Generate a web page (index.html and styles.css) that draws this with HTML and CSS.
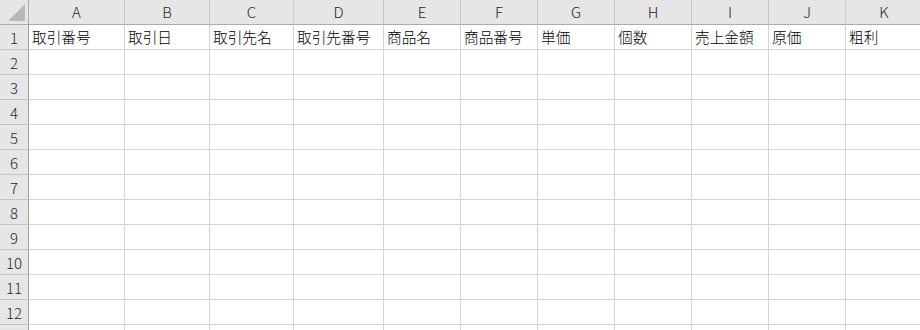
FILE: index.html
```html
<!DOCTYPE html>
<html lang="ja">
<head>
<meta charset="utf-8">
<title>Sheet1</title>
<link rel="stylesheet" href="styles.css">
</head>
<body>
<div class="sheet">
  <div class="corner"><svg class="corner-mark" width="17" height="17" viewBox="0 0 17 17"><polygon points="17,0 17,17 0,17" fill="#b7b7b7"/></svg></div>
  <div class="col-head">A</div><div class="col-head">B</div><div class="col-head">C</div><div class="col-head">D</div><div class="col-head">E</div><div class="col-head">F</div><div class="col-head">G</div><div class="col-head">H</div><div class="col-head">I</div><div class="col-head">J</div><div class="col-head">K</div>

  <div class="row-head">1</div><div class="cell">取引番号</div><div class="cell">取引日</div><div class="cell">取引先名</div><div class="cell">取引先番号</div><div class="cell">商品名</div><div class="cell">商品番号</div><div class="cell">単価</div><div class="cell">個数</div><div class="cell">売上金額</div><div class="cell">原価</div><div class="cell">粗利</div>
  <div class="row-head">2</div><div class="cell"></div><div class="cell"></div><div class="cell"></div><div class="cell"></div><div class="cell"></div><div class="cell"></div><div class="cell"></div><div class="cell"></div><div class="cell"></div><div class="cell"></div><div class="cell"></div>
  <div class="row-head">3</div><div class="cell"></div><div class="cell"></div><div class="cell"></div><div class="cell"></div><div class="cell"></div><div class="cell"></div><div class="cell"></div><div class="cell"></div><div class="cell"></div><div class="cell"></div><div class="cell"></div>
  <div class="row-head">4</div><div class="cell"></div><div class="cell"></div><div class="cell"></div><div class="cell"></div><div class="cell"></div><div class="cell"></div><div class="cell"></div><div class="cell"></div><div class="cell"></div><div class="cell"></div><div class="cell"></div>
  <div class="row-head">5</div><div class="cell"></div><div class="cell"></div><div class="cell"></div><div class="cell"></div><div class="cell"></div><div class="cell"></div><div class="cell"></div><div class="cell"></div><div class="cell"></div><div class="cell"></div><div class="cell"></div>
  <div class="row-head">6</div><div class="cell"></div><div class="cell"></div><div class="cell"></div><div class="cell"></div><div class="cell"></div><div class="cell"></div><div class="cell"></div><div class="cell"></div><div class="cell"></div><div class="cell"></div><div class="cell"></div>
  <div class="row-head">7</div><div class="cell"></div><div class="cell"></div><div class="cell"></div><div class="cell"></div><div class="cell"></div><div class="cell"></div><div class="cell"></div><div class="cell"></div><div class="cell"></div><div class="cell"></div><div class="cell"></div>
  <div class="row-head">8</div><div class="cell"></div><div class="cell"></div><div class="cell"></div><div class="cell"></div><div class="cell"></div><div class="cell"></div><div class="cell"></div><div class="cell"></div><div class="cell"></div><div class="cell"></div><div class="cell"></div>
  <div class="row-head">9</div><div class="cell"></div><div class="cell"></div><div class="cell"></div><div class="cell"></div><div class="cell"></div><div class="cell"></div><div class="cell"></div><div class="cell"></div><div class="cell"></div><div class="cell"></div><div class="cell"></div>
  <div class="row-head">10</div><div class="cell"></div><div class="cell"></div><div class="cell"></div><div class="cell"></div><div class="cell"></div><div class="cell"></div><div class="cell"></div><div class="cell"></div><div class="cell"></div><div class="cell"></div><div class="cell"></div>
  <div class="row-head">11</div><div class="cell"></div><div class="cell"></div><div class="cell"></div><div class="cell"></div><div class="cell"></div><div class="cell"></div><div class="cell"></div><div class="cell"></div><div class="cell"></div><div class="cell"></div><div class="cell"></div>
  <div class="row-head">12</div><div class="cell"></div><div class="cell"></div><div class="cell"></div><div class="cell"></div><div class="cell"></div><div class="cell"></div><div class="cell"></div><div class="cell"></div><div class="cell"></div><div class="cell"></div><div class="cell"></div>
  <div class="row-head"></div><div class="cell"></div><div class="cell"></div><div class="cell"></div><div class="cell"></div><div class="cell"></div><div class="cell"></div><div class="cell"></div><div class="cell"></div><div class="cell"></div><div class="cell"></div><div class="cell"></div>
</div>
</body>
</html>
```

FILE: styles.css
```css
html, body {
  margin: 0;
  padding: 0;
  background: #ffffff;
  overflow: hidden;
}

.sheet {
  display: grid;
  grid-template-columns: 29px 96px 85px 84px 90px 77px 77px 77px 77px 77px 77px 77px;
  grid-auto-rows: 25px;
  width: max-content;
  font-family: "Noto Sans CJK JP", "Noto Sans", sans-serif;
  font-weight: 300;
  color: #000000;
}

.corner,
.col-head,
.row-head {
  background: #e6e6e6;
  color: #262626;
  box-sizing: border-box;
}

.corner {
  position: relative;
  border-right: 1px solid #ababab;
  border-bottom: 1px solid #ababab;
}

.corner-mark {
  position: absolute;
  right: 3px;
  bottom: 3px;
  display: block;
}

.col-head {
  display: flex;
  align-items: center;
  justify-content: center;
  font-size: 15px;
  border-right: 1px solid #c6c6c6;
  border-bottom: 1px solid #ababab;
  padding-bottom: 1px;
}

.row-head {
  display: flex;
  align-items: center;
  justify-content: center;
  font-size: 15px;
  border-right: 1px solid #9f9f9f;
  border-bottom: 1px solid #c6c6c6;
}

.cell {
  box-sizing: border-box;
  border-right: 1px solid #d4d4d4;
  border-bottom: 1px solid #d4d4d4;
  padding: 0 0 0 3px;
  font-size: 14.67px;
  line-height: 24px;
  white-space: nowrap;
  overflow: hidden;
}
```
